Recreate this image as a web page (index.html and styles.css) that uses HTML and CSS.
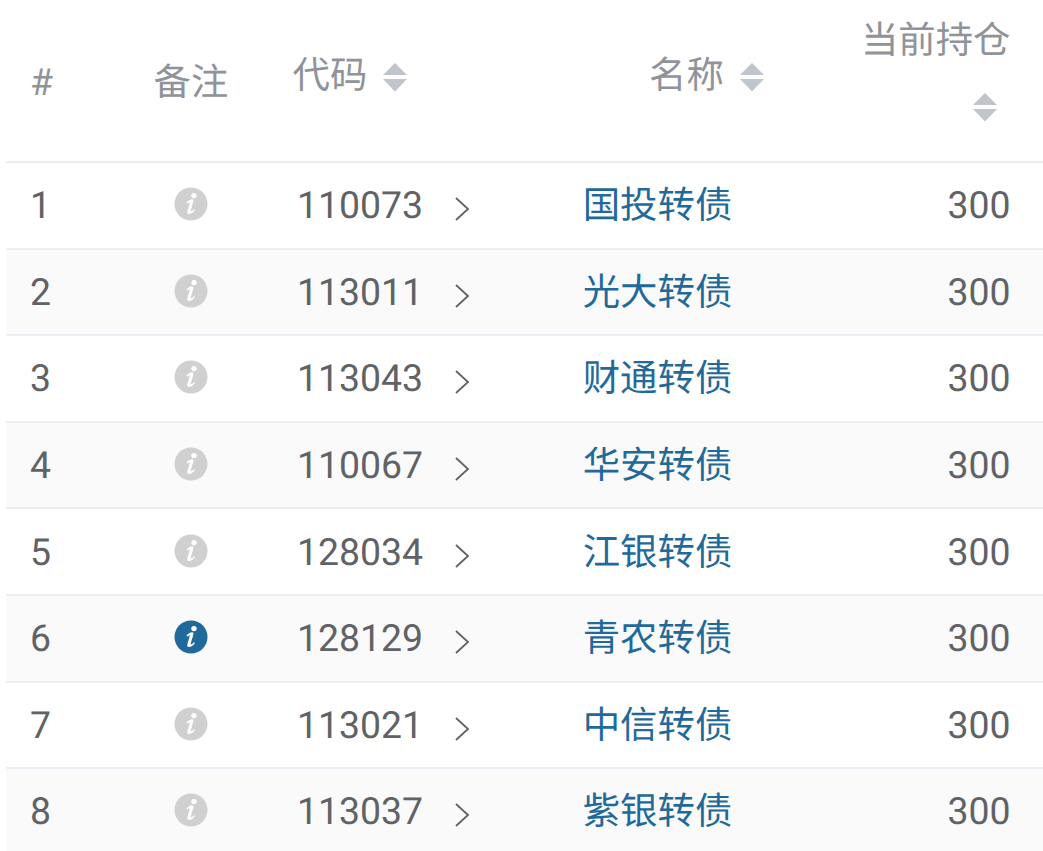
FILE: index.html
```html
<!DOCTYPE html>
<html lang="zh-CN">
<head>
<meta charset="utf-8">
<title>转债持仓</title>
<link rel="stylesheet" href="styles.css">
</head>
<body>
<svg class="defs" width="0" height="0" aria-hidden="true">
  <defs>
    <symbol id="info" viewBox="0 0 34 34">
      <circle cx="17" cy="17" r="16.5" fill="currentColor"/>
      <circle cx="20" cy="8.6" r="2.7" fill="#fff"/>
      <path d="M12.6 15.2c2-1.9 4-2.9 5.6-2.9 1.2 0 1.5 1 1.1 2.4l-2.6 8.8c-.2.8.3 1 .9.7.8-.4 1.6-1.1 2.4-2l1 .9c-1.9 2.5-4 3.900-6 3.900-1.6 0-2.1-1.1-1.6-2.9l2.3-7.9c.2-.8-.2-1-.8-.7-.5.3-1 .7-1.5 1.2z" fill="#fff"/>
    </symbol>
    <symbol id="chev" viewBox="0 0 16 26">
      <path d="M2 2l12 11L2 24" fill="none" stroke="#606266" stroke-width="1.8"/>
    </symbol>
    <symbol id="sort" viewBox="0 0 24 30">
      <path d="M12 0l12 12H0z" fill="#c0c4cc"/>
      <path d="M0 16h24L12 28.500z" fill="#c0c4cc"/>
    </symbol>
  </defs>
</svg>
<table class="grid">
  <colgroup>
    <col class="c-num"><col class="c-note"><col class="c-code"><col class="c-name"><col class="c-pos">
  </colgroup>
  <thead>
    <tr>
      <th class="num">#</th>
      <th class="note">备注</th>
      <th class="code sortable"><span class="shift">代码<svg class="sort"><use href="#sort"/></svg></span></th>
      <th class="name sortable"><span class="shift name-head">名称<svg class="sort"><use href="#sort"/></svg></span></th>
      <th class="pos sortable"><span class="pos-title">当前持仓</span><svg class="sort pos-sort"><use href="#sort"/></svg></th>
    </tr>
  </thead>
  <tbody>
    <tr><td>1</td><td class="note"><svg class="info"><use href="#info"/></svg></td><td class="code">110073<svg class="chev"><use href="#chev"/></svg></td><td class="name">国投转债</td><td class="pos">300</td></tr>
    <tr class="alt"><td>2</td><td class="note"><svg class="info"><use href="#info"/></svg></td><td class="code">113011<svg class="chev"><use href="#chev"/></svg></td><td class="name">光大转债</td><td class="pos">300</td></tr>
    <tr><td>3</td><td class="note"><svg class="info"><use href="#info"/></svg></td><td class="code">113043<svg class="chev"><use href="#chev"/></svg></td><td class="name">财通转债</td><td class="pos">300</td></tr>
    <tr class="alt"><td>4</td><td class="note"><svg class="info"><use href="#info"/></svg></td><td class="code">110067<svg class="chev"><use href="#chev"/></svg></td><td class="name">华安转债</td><td class="pos">300</td></tr>
    <tr><td>5</td><td class="note"><svg class="info"><use href="#info"/></svg></td><td class="code">128034<svg class="chev"><use href="#chev"/></svg></td><td class="name">江银转债</td><td class="pos">300</td></tr>
    <tr class="alt"><td>6</td><td class="note"><svg class="info active"><use href="#info"/></svg></td><td class="code">128129<svg class="chev"><use href="#chev"/></svg></td><td class="name">青农转债</td><td class="pos">300</td></tr>
    <tr><td>7</td><td class="note"><svg class="info"><use href="#info"/></svg></td><td class="code">113021<svg class="chev"><use href="#chev"/></svg></td><td class="name">中信转债</td><td class="pos">300</td></tr>
    <tr class="alt"><td>8</td><td class="note"><svg class="info"><use href="#info"/></svg></td><td class="code">113037<svg class="chev"><use href="#chev"/></svg></td><td class="name">紫银转债</td><td class="pos">300</td></tr>
  </tbody>
</table>
</body>
</html>
```
FILE: styles.css
```css
html, body {
  margin: 0;
  height: 100%;
  overflow: hidden;
  background: #fff;
}

.defs {
  display: block;
  height: 0;
}

.grid {
  margin-left: 6px;
  width: 1037px;
  table-layout: fixed;
  border-collapse: separate;
  border-spacing: 0;
  font-family: Roboto, "Noto Sans CJK SC", sans-serif;
  font-size: 37.4px;
  color: #606266;
  text-rendering: geometricPrecision;
}

.c-num { width: 115.5px; }
.c-note { width: 139px; }
.c-code { width: 254px; }
.c-name { width: 287px; }
.c-pos { width: 241.5px; }

th, td {
  padding: 2px 0 0 24px;
  border-bottom: 2px solid #ebeef5;
  box-sizing: border-box;
  text-align: left;
  vertical-align: middle;
  line-height: 48px;
  white-space: nowrap;
}

th {
  height: 163px;
  padding-top: 4px;
  font-weight: 400;
  color: #909399;
}

td {
  height: 86.6px;
}

.alt td {
  background: #fafafa;
}

.note {
  padding-left: 0;
  text-align: center;
}

td.note {
  padding-top: 0;
  line-height: 0;
}

.code {
  padding-left: 36.5px;
}

th.code {
  padding-left: 32px;
}

.name {
  padding-left: 0;
  text-align: center;
}

td.name {
  padding-right: 1px;
  color: #1f6a9b;
}

.pos {
  padding-right: 32.500px;
  padding-left: 0;
  text-align: right;
}

.shift {
  display: block;
  margin-top: -14px;
}

.name-head {
  margin-left: 97px;
}

.pos-title {
  display: block;
  margin-top: -25px;
}

.sort {
  display: inline-block;
  width: 24px;
  height: 30px;
  margin-left: 16px;
  vertical-align: -5px;
}

.pos-sort {
  display: block;
  margin: 28px 14px 0 auto;
}

.info {
  display: inline-block;
  width: 34px;
  height: 34px;
  margin-top: -2px;
  color: #d0d0d0;
  vertical-align: middle;
}

.info.active {
  color: #1f6a9b;
}

.chev {
  display: inline-block;
  width: 16px;
  height: 26px;
  margin-left: 30.500px;
  vertical-align: -4px;
}
```
